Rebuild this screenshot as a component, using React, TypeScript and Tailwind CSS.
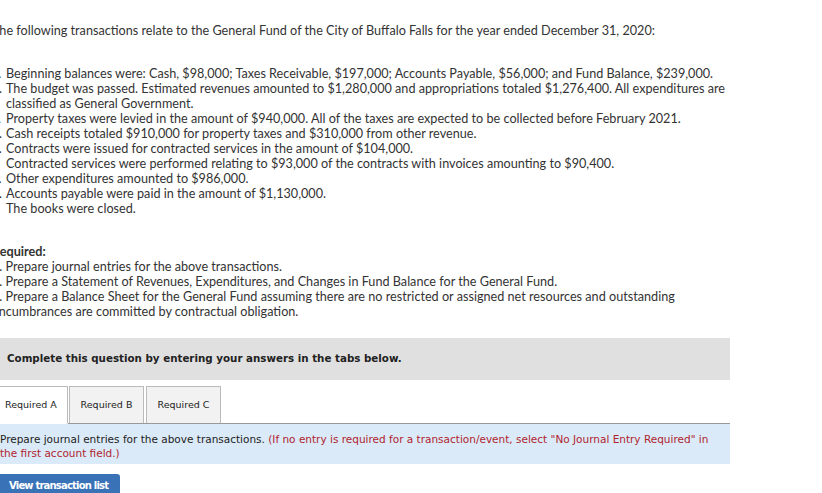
const transactions = [
  ["a.", "Beginning balances were: Cash, $98,000; Taxes Receivable, $197,000; Accounts Payable, $56,000; and Fund Balance, $239,000."],
  ["b.", "The budget was passed. Estimated revenues amounted to $1,280,000 and appropriations totaled $1,276,400. All expenditures are classified as General Government."],
  ["c.", "Property taxes were levied in the amount of $940,000. All of the taxes are expected to be collected before February 2021."],
  ["d.", "Cash receipts totaled $910,000 for property taxes and $310,000 from other revenue."],
  ["e.", "Contracts were issued for contracted services in the amount of $104,000."],
  ["f.", "Contracted services were performed relating to $93,000 of the contracts with invoices amounting to $90,400."],
  ["g.", "Other expenditures amounted to $986,000."],
  ["h.", "Accounts payable were paid in the amount of $1,130,000."],
  ["i.", "The books were closed."],
];

const required = [
  "1. Prepare journal entries for the above transactions.",
  "2. Prepare a Statement of Revenues, Expenditures, and Changes in Fund Balance for the General Fund.",
  "3. Prepare a Balance Sheet for the General Fund assuming there are no restricted or assigned net resources and outstanding encumbrances are committed by contractual obligation.",
];

export default function App() {
  return (
    <div className="w-[822px] h-[493px] overflow-hidden bg-white">
      <div className="-ml-[8px] w-[738px]">
        {/* Question text */}
        <div className="font-['Lato',sans-serif] text-[12.65px] leading-[15px] text-[#333]">
          <p className="pt-[23px]">
            The following transactions relate to the General Fund of the City of Buffalo Falls for the year ended December 31, 2020:
          </p>

          <div className="mt-[28px]">
            {transactions.map(([label, text]) => (
              <div key={label} className="flex">
                <span className="w-[14px] shrink-0">{label}</span>
                <span>{text}</span>
              </div>
            ))}
          </div>

          <p className="mt-[28px] font-bold">Required:</p>
          {required.map((line, i) => (
            <p key={i}>{line}</p>
          ))}
        </div>

        {/* Instruction bar */}
        <div className="mt-[19px] h-[42px] bg-[#e0e0e0] flex items-center pl-[15px]">
          <span className="font-['DejaVu_Sans',sans-serif] text-[10.3px] font-bold text-[#222]">
            Complete this question by entering your answers in the tabs below.
          </span>
        </div>

        {/* Tabs */}
        <div className="mt-[6px] flex items-end border-b border-[#999]">
          <div className="h-[38px] w-[76px] -mb-px bg-white border border-[#bbb] border-b-white flex items-center pl-[12px] font-['DejaVu_Sans',sans-serif] text-[9.5px] text-[#222]">
            Required A
          </div>
          <div className="h-[37px] w-[75px] ml-px bg-[#f2f2f2] border border-[#bbb] border-b-0 flex items-center justify-center font-['DejaVu_Sans',sans-serif] text-[9.5px] text-[#222]">
            Required B
          </div>
          <div className="h-[37px] w-[75px] ml-[2px] bg-[#f2f2f2] border border-[#bbb] border-b-0 flex items-center justify-center font-['DejaVu_Sans',sans-serif] text-[9.5px] text-[#222]">
            Required C
          </div>
        </div>

        <div className="h-[40px] bg-[#dbeaf8] pl-[8px] pr-[10px] pt-[8px] font-['DejaVu_Sans',sans-serif] text-[10.5px] leading-[14px] text-[#222]">
          Prepare journal entries for the above transactions.{" "}
          <span className="text-[#b0242f]">
            (If no entry is required for a transaction/event, select "No Journal Entry Required" in the first account field.)
          </span>
        </div>

        <button className="mt-[10px] block h-[24px] w-[128px] rounded-t-[3px] bg-[#3a72b8] text-left pl-[17px] pb-[2px] font-['DejaVu_Sans',sans-serif] text-[10px] font-bold tracking-[-0.8px] text-white">
          View transaction list
        </button>
      </div>
    </div>
  );
}
